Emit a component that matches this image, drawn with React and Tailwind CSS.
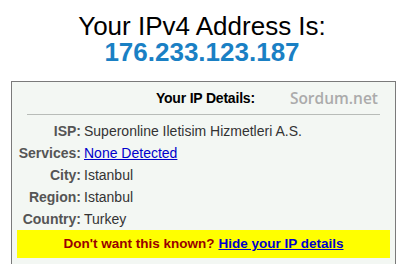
import React from "react";

const rows = [
  ["ISP:", "Superonline Iletisim Hizmetleri A.S.", false],
  ["Services:", "None Detected", true],
  ["City:", "Istanbul", false],
  ["Region:", "Istanbul", false],
  ["Country:", "Turkey", false],
];

export default function App() {
  return (
    <div
      className="w-[404px] h-[264px] overflow-hidden bg-white"
      style={{ fontFamily: '"Liberation Sans", Arial, sans-serif' }}
    >
      <div className="pt-[13px] text-center text-[26px] leading-[26px]">
        <div className="text-black">Your IPv4 Address Is:</div>
        <div className="font-bold text-[#1a80c4]">176.233.123.187</div>
      </div>
      <div className="mt-[16px] ml-[11px] w-[385px] h-[200px] border border-[#7a7a7a] bg-[#f3f7f3]">
        <div className="flex h-[32px] items-center justify-end pr-[17px]">
          <span className="text-[14px] leading-[16px] font-bold text-black tracking-[-0.2px]">Your IP Details:</span>
          <span
            className="ml-[35px] text-[15.5px] leading-[16px] font-semibold text-[#ababab]"
            style={{ fontFamily: '"Open Sans", sans-serif' }}
          >
            Sordum.net
          </span>
        </div>
        <div className="mx-[15px] h-px bg-[#b8bcb8]" />
        <div className="mt-[5px] px-[5px]">
          {rows.map(([label, value, link]) => (
            <div key={label} className="flex h-[22px] items-center text-[14px] leading-[16px]">
              <span className="w-[64px] text-right font-bold text-[#555]">{label}</span>
              <span className="ml-[3px] text-[#333]">
                {link ? <a href="#" className="text-[#0000cc] underline">{value}</a> : value}
              </span>
            </div>
          ))}
          <div className="flex h-[28px] items-center justify-center bg-[#ffff00] text-[13.5px] font-bold leading-[16px]">
            <span className="text-[#990000]">Don't want this known?</span>
            <a href="#" className="ml-[4px] text-[#0000cc] underline">Hide your IP details</a>
          </div>
        </div>
      </div>
    </div>
  );
}
